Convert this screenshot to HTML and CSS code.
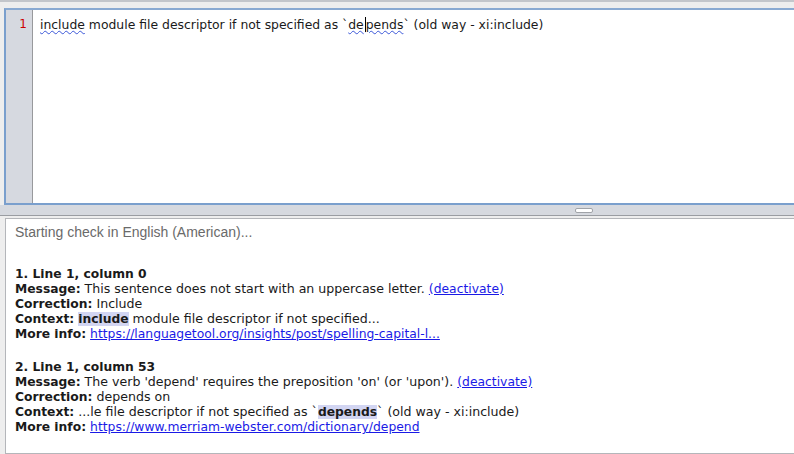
FILE: index.html
```html
<!DOCTYPE html>
<html>
<head>
<meta charset="utf-8">
<link rel="stylesheet" href="styles.css">
</head>
<body>
<div class="app">
  <div class="topstrip"></div>
  <div class="editor">
    <div class="gutter"><span class="ln">1</span></div>
    <div class="code"><span class="squig">include</span> module file descriptor if not specified as `<span class="squig">de<span class="caret"></span>pends</span>` (old way - xi:include)</div>
  </div>
  <div class="splitter"><div class="handle"></div></div>
  <div class="results">
    <div class="status">Starting check in English (American)...</div>
    <div class="match">
      <div class="line"><b>1. Line 1, column 0</b></div>
      <div class="line"><b>Message:</b> This sentence does not start with an uppercase letter. <a class="link" href="#">(deactivate)</a></div>
      <div class="line"><b>Correction:</b> Include</div>
      <div class="line"><b>Context:</b> <b class="hl">include</b> module file descriptor if not specified...</div>
      <div class="line"><b>More info:</b> <a class="link" href="#">https://languagetool.org/insights/post/spelling-capital-l...</a></div>
    </div>
    <div class="match second">
      <div class="line"><b>2. Line 1, column 53</b></div>
      <div class="line"><b>Message:</b> The verb 'depend' requires the preposition 'on' (or 'upon'). <a class="link" href="#">(deactivate)</a></div>
      <div class="line"><b>Correction:</b> depends on</div>
      <div class="line"><b>Context:</b> ...le file descriptor if not specified as `<b class="hl">depends</b>` (old way - xi:include)</div>
      <div class="line"><b>More info:</b> <a class="link" href="#">https://www.merriam-webster.com/dictionary/depend</a></div>
    </div>
  </div>
</div>
</body>
</html>
```

FILE: styles.css
```css
html, body {
  margin: 0;
  padding: 0;
  width: 794px;
  height: 454px;
  overflow: hidden;
  background: #eeeeee;
}

.app {
  display: flex;
  flex-direction: column;
  height: 454px;
  overflow: hidden;
}

.topstrip {
  height: 2px;
  background: #c3c6cb;
  flex: none;
}

.editor {
  flex: none;
  margin: 6px -10px 0 4px;
  height: 193px;
  border: 2px solid #7a9fcd;
  border-top-color: #8aaad2;
  display: flex;
  background: #ffffff;
}

.gutter {
  width: 27px;
  background: #d6d9e0;
  border-right: 1px solid #98999c;
  flex: none;
  display: flex;
  justify-content: flex-end;
  padding-top: 7px;
  box-sizing: border-box;
}

.ln {
  font-family: "DejaVu Sans", sans-serif;
  font-size: 12px;
  line-height: 15px;
  color: #cc0000;
  padding-right: 5px;
}

.code {
  padding: 7px 0 0 7px;
  font-family: "DejaVu Sans", sans-serif;
  font-size: 12.4px;
  line-height: 15px;
  color: #1a1a1a;
  white-space: pre;
}

.squig {
  text-decoration: underline wavy #3b57d8;
  text-decoration-thickness: 1px;
  text-underline-offset: 1px;
}

.caret {
  display: inline-block;
  width: 1px;
  height: 15px;
  background: #000;
  vertical-align: -3px;
  margin: 0 0 0 1px;
}

.splitter {
  flex: none;
  height: 10px;
  background: #d6d9df;
  border-bottom: 1px solid #9a9da2;
  display: flex;
  align-items: center;
  padding-left: 575px;
}

.handle {
  width: 16px;
  height: 3px;
  border: 1px solid #a0a3a8;
  border-radius: 2px;
  background: #ffffff;
}

.results {
  flex: 1;
  margin: 2px -10px 0 5px;
  background: #ffffff;
  border: 1px solid #b4b6ba;
  padding: 6px 0 0 9px;
  font-family: "DejaVu Sans", sans-serif;
  font-size: 12.6px;
  line-height: 15px;
  color: #1a1a1a;
  white-space: nowrap;
}

.status {
  font-family: "Liberation Sans", sans-serif;
  font-size: 14px;
  height: 15px;
  color: #6a6a6a;
  margin-top: 0;
  margin-bottom: 26px;
}

.match.second {
  margin-top: 18px;
}

.line {
  height: 15px;
}

.line b {
  font-weight: bold;
  font-size: 12.3px;
}

.hl {
  background: #d2d5f2;
}

.link {
  color: #1a1ae6;
  text-decoration: underline;
  font-size: 12.35px;
}
```
